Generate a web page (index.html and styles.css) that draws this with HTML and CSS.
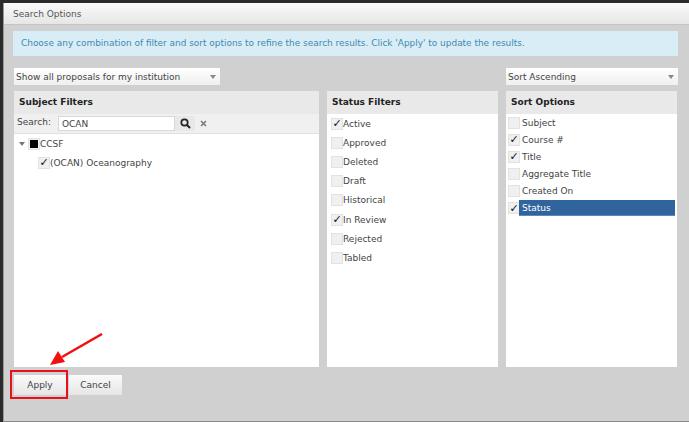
FILE: index.html
```html
<!DOCTYPE html>
<html lang="en">
<head>
    <meta charset="UTF-8">
    <title>Search Options</title>
    <link rel="stylesheet" href="styles.css">
</head>
<body>
    <div class="dialog">
        <div class="dialog-title">Search Options</div>
        <div class="dialog-body">
            <div class="alert">Choose any combination of filter and sort options to refine the search results. Click 'Apply' to update the results.</div>
            <div class="select-row">
                <div class="select select-wide">Show all proposals for my institution<span class="caret"></span></div>
                <div class="select select-sort">Sort Ascending<span class="caret"></span></div>
            </div>
            <div class="panels">
                <div class="panel panel-subject">
                    <div class="panel-head">Subject Filters</div>
                    <div class="search-row">
                        <span class="search-label">Search:</span>
                        <div class="search-input">OCAN</div>
                        <div class="search-btn">
                            <svg width="11" height="11" viewBox="0 0 11 11"><circle cx="4.5" cy="4.5" r="3.2" fill="none" stroke="#222" stroke-width="1.7"/><path d="M7 7l3 3" stroke="#222" stroke-width="2"/></svg>
                        </div>
                        <svg class="search-clear" width="7" height="7" viewBox="0 0 7 7"><path d="M1 1l5 5M6 1l-5 5" stroke="#777" stroke-width="1.5"/></svg>
                    </div>
                    <div class="tree">
                        <div class="tree-row">
                            <span class="tree-caret"></span>
                            <span class="check"><span class="check-fill"></span></span>
                            <span>CCSF</span>
                        </div>
                        <div class="tree-row tree-child">
                            <span class="check is-checked"></span>
                            <span>(OCAN) Oceanography</span>
                        </div>
                    </div>
                </div>
                <div class="panel panel-status">
                    <div class="panel-head">Status Filters</div>
                    <div class="status-list">
                        <div class="status-row"><span class="check is-checked"></span>Active</div>
                        <div class="status-row"><span class="check"></span>Approved</div>
                        <div class="status-row"><span class="check"></span>Deleted</div>
                        <div class="status-row"><span class="check"></span>Draft</div>
                        <div class="status-row"><span class="check"></span>Historical</div>
                        <div class="status-row"><span class="check is-checked"></span>In Review</div>
                        <div class="status-row"><span class="check"></span>Rejected</div>
                        <div class="status-row"><span class="check"></span>Tabled</div>
                    </div>
                </div>
                <div class="panel panel-sort">
                    <div class="panel-head">Sort Options</div>
                    <div class="sort-list">
                        <div class="sort-row"><span class="check"></span><span class="sort-label">Subject</span></div>
                        <div class="sort-row"><span class="check is-checked"></span><span class="sort-label">Course #</span></div>
                        <div class="sort-row"><span class="check is-checked"></span><span class="sort-label">Title</span></div>
                        <div class="sort-row"><span class="check"></span><span class="sort-label">Aggregate Title</span></div>
                        <div class="sort-row"><span class="check"></span><span class="sort-label">Created On</span></div>
                        <div class="sort-row"><span class="check is-checked"></span><span class="sort-label is-active">Status</span></div>
                    </div>
                </div>
            </div>
            <div class="actions">
                <div class="button">Apply</div>
                <div class="button">Cancel</div>
            </div>
        </div>
    </div>
    <div class="callout-box"></div>
    <svg class="callout-arrow" width="56" height="36" viewBox="0 0 56 36">
        <path d="M53 1L13 24" stroke="#f01010" stroke-width="2.5" fill="none"/>
        <path d="M1 32L9 18L16 29Z" fill="#f01010"/>
    </svg>
</body>
</html>
```

FILE: styles.css
```css
* {
    box-sizing: border-box;
}
html, body {
    height: 100%;
}
body {
    margin: 0;
    background: #2b2b2b;
    font-family: "DejaVu Sans", Verdana, sans-serif;
    font-size: 9px;
    color: #444;
    overflow: hidden;
    position: relative;
}
.dialog {
    margin: 3px 0 0 3px;
    height: 419px;
    background: #d0d0d0;
    border-left: 1px solid #999;
    border-bottom: 1px solid #8a8a8a;
    display: flex;
    flex-direction: column;
}
.dialog-title {
    height: 22px;
    padding: 0 0 0 9px;
    line-height: 22px;
    background: linear-gradient(#fafafa, #e6e6e6);
    border-bottom: 1px solid #c4c4c4;
    color: #555;
}
.dialog-body {
    flex: 1;
    padding: 6px 11px 0 9px;
}
.alert {
    height: 25px;
    line-height: 25px;
    padding-left: 8px;
    background: #d9edf7;
    color: #4389ad;
    font-size: 8.95px;
    white-space: nowrap;
}
.select-row {
    display: flex;
    justify-content: space-between;
    margin-top: 12px;
    padding: 0 0 0 1px;
}
.select {
    height: 17px;
    line-height: 18px;
    padding-left: 2px;
    background: linear-gradient(#fff, #efefef);
    color: #444;
    position: relative;
}
.select-wide {
    width: 206px;
}
.select-sort {
    width: 172px;
}
.caret {
    position: absolute;
    right: 4px;
    top: 7px;
    border: 3.5px solid transparent;
    border-top: 4px solid #888;
    border-bottom: 0;
}
.panels {
    display: flex;
    gap: 8px;
    margin: 6px 0 0 1px;
    height: 276px;
}
.panel {
    background: #fff;
}
.panel-subject {
    width: 305px;
}
.panel-status {
    width: 171px;
}
.panel-sort {
    width: 171px;
}
.panel-head {
    height: 23px;
    line-height: 23px;
    padding-left: 5px;
    background: #e9e9e9;
    font-weight: bold;
    color: #222;
}
.search-row {
    height: 20px;
    background: #f0f0f0;
    border-bottom: 1px solid #e0e0e0;
    display: flex;
    align-items: center;
    padding-left: 3px;
}
.search-label {
    width: 41px;
    margin-top: -4px;
}
.search-input {
    width: 117px;
    height: 15px;
    line-height: 15px;
    padding-left: 3px;
    background: #fff;
    border: 1px solid #d8d8d8;
}
.search-btn {
    width: 20px;
    height: 15px;
    background: #e8e8e8;
    display: flex;
    align-items: center;
    justify-content: center;
}
.search-clear {
    margin-left: 5px;
}
.tree-row {
    height: 19px;
    display: flex;
    align-items: center;
    padding-left: 5px;
}
.tree-child {
    padding-left: 24px;
}
.tree-caret {
    width: 0;
    height: 0;
    border: 3px solid transparent;
    border-top: 4px solid #777;
    border-bottom: 0;
    margin-right: 3px;
}
.check {
    width: 12px;
    height: 12px;
    flex: none;
    background: #f0f0f0;
    border: 1px solid #e2e2e2;
    display: inline-flex;
    align-items: center;
    justify-content: center;
    color: #111;
    font-size: 11px;
    line-height: 1;
}
.check.is-checked::before {
    content: "\2713";
}
.check-fill {
    width: 8px;
    height: 8px;
    background: #000;
}
.status-list {
    padding: 0 0 0 4px;
}
.status-row {
    height: 19.2px;
    display: flex;
    align-items: center;
}
.sort-list {
    padding: 0 2px 0 2px;
}
.sort-row {
    height: 17.1px;
    display: flex;
    align-items: center;
}
.sort-row .check {
    margin-right: -1px;
}
.sort-label {
    flex: 1;
    padding-left: 3px;
    height: 16px;
    line-height: 16px;
}
.sort-label.is-active {
    background: #2f659c;
    color: #fff;
    border-bottom: 1px solid #5e88b5;
}
.actions {
    display: flex;
    gap: 3px;
    margin: 8px 0 0 1px;
}
.button {
    width: 52px;
    height: 20px;
    line-height: 20px;
    text-align: center;
    background: linear-gradient(#fafafa, #e6e6e6);
    color: #444;
}
.button + .button {
    width: 53px;
}
.callout-box {
    position: absolute;
    left: 10px;
    top: 370px;
    width: 58px;
    height: 29px;
    border: 2px solid #e8101a;
}
.callout-arrow {
    position: absolute;
    left: 49px;
    top: 333px;
}
```
